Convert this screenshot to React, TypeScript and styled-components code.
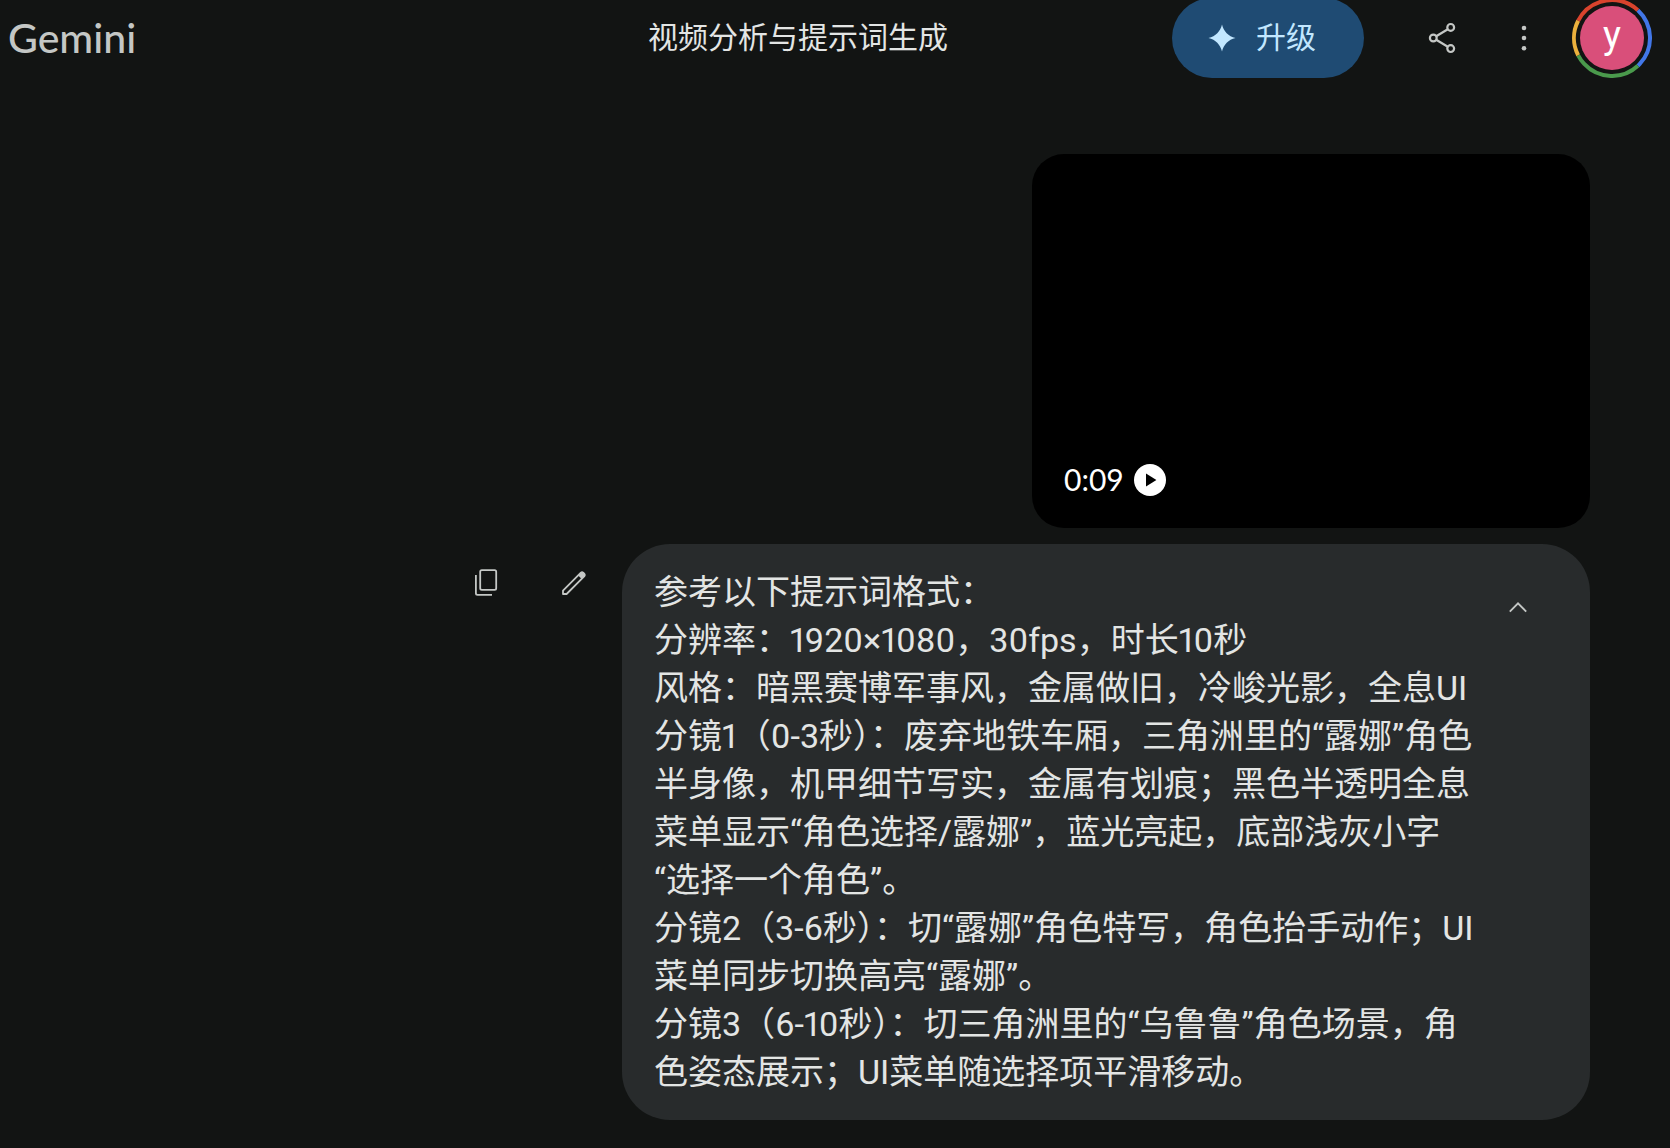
import React, { useState } from 'react';
import styled, { createGlobalStyle } from 'styled-components';

const GlobalStyle = createGlobalStyle`
  *, *::before, *::after { box-sizing: border-box; }
  body {
    margin: 0;
    background: #121413;
    color: #e3e5e4;
    font-family: Roboto, "Noto Sans CJK SC", sans-serif;
    font-variant-numeric: proportional-nums;
  }
`;

const Page = styled.div`
  display: flex;
  flex-direction: column;
  min-height: 100vh;
  overflow-x: hidden;
`;

const Header = styled.header`
  display: flex;
  align-items: center;
  height: 80px;
  margin-top: -2px;
  padding: 0 18px 0 8px;
`;

const Brand = styled.a`
  color: #c4c7c5;
  font: 500 41px/48px Lato, sans-serif;
  text-decoration: none;
`;

const Title = styled.h1`
  flex: 1;
  margin: 0;
  padding-right: 224px;
  text-align: right;
  font-size: 30px;
  font-weight: 400;
  line-height: 40px;
  white-space: nowrap;
`;

const UpgradeButton = styled.button`
  display: flex;
  align-items: center;
  gap: 20px;
  height: 80px;
  padding: 0 48px 0 36px;
  border: 0;
  border-radius: 40px;
  background: #1f4b73;
  color: #c2e7ff;
  font: inherit;
  font-size: 30px;
  line-height: 40px;
  white-space: nowrap;
  cursor: pointer;
`;

const HeaderTools = styled.div`
  display: flex;
  gap: 2px;
  margin: 0 8px 0 38px;
`;

const IconButton = styled.button`
  display: flex;
  flex: none;
  align-items: center;
  justify-content: center;
  width: 80px;
  height: 80px;
  padding: 0;
  border: 0;
  border-radius: 50%;
  background: transparent;
  color: #c4c7c5;
  cursor: pointer;
`;

const AvatarButton = styled.button`
  display: grid;
  flex: none;
  place-items: center;
  width: 80px;
  height: 80px;
  padding: 0;
  border: 0;
  border-radius: 50%;
  background: transparent;
  cursor: pointer;

  > * { grid-area: 1 / 1; }
`;

const AvatarFace = styled.span`
  width: 64px;
  height: 64px;
  border-radius: 50%;
  background: #d94f7a;
  color: #fff;
  font: 400 38px/58px Roboto, sans-serif;
  text-align: center;
`;

const Conversation = styled.main`
  display: flex;
  flex-direction: column;
  align-items: flex-end;
  gap: 16px;
  padding: 76px 80px 28px;
`;

const VideoCard = styled.button`
  display: flex;
  align-items: flex-end;
  gap: 10px;
  width: 558px;
  max-width: 100%;
  height: 374px;
  padding: 32px;
  border: 0;
  border-radius: 32px;
  background: #000;
  color: #fff;
  font: 30px/34px Lato, sans-serif;
  cursor: pointer;
`;

const MessageRow = styled.div`
  display: flex;
  align-items: flex-start;
  gap: 8px;
  max-width: 100%;
`;

const Bubble = styled.section`
  display: flex;
  align-items: flex-start;
  min-width: 0;
  padding: 24px 32px;
  border-radius: 48px;
  background: #282b2c;
`;

const Prompt = styled.div`
  flex: 0 1 824px;
  font-size: 34px;
  line-height: 48px;
`;

const PromptLine = styled.p`
  margin: 0;
`;

const Sparkle = () => (
  <svg width="28" height="28" viewBox="0 0 28 28" fill="currentColor" aria-hidden="true">
    <path d="M14 0.5C15.6 7.4 20.4 12.3 27.5 14C20.4 15.7 15.6 20.6 14 27.5C12.4 20.6 7.6 15.7 0.5 14C7.6 12.3 12.4 7.4 14 0.5Z" />
  </svg>
);

const ShareIcon = () => (
  <svg width="48" height="48" viewBox="0 0 48 48" fill="none" stroke="currentColor" strokeWidth="2.2" aria-hidden="true">
    <circle cx="15.3" cy="24" r="3.4" />
    <circle cx="32.7" cy="13.4" r="3.4" />
    <circle cx="32.7" cy="34.6" r="3.4" />
    <path d="M18.2 22.2L29.8 15.2M18.2 25.8L29.8 32.8" />
  </svg>
);

const MoreIcon = () => (
  <svg width="48" height="48" viewBox="0 0 48 48" fill="currentColor" aria-hidden="true">
    <circle cx="24" cy="14" r="2.3" />
    <circle cx="24" cy="24" r="2.3" />
    <circle cx="24" cy="34.2" r="2.3" />
  </svg>
);

const CopyIcon = () => (
  <svg width="48" height="48" viewBox="0 0 48 48" fill="none" stroke="currentColor" strokeWidth="1.8" aria-hidden="true">
    <rect x="18.2" y="10.2" width="16" height="19.6" rx="1.6" />
    <path d="M13.9 15V33.2A1.6 1.6 0 0 0 15.5 34.8H30" />
  </svg>
);

const PencilIcon = () => (
  <svg width="48" height="48" viewBox="0 0 48 48" aria-hidden="true">
    <path
      d="M13 34V30.6L30.9 12.7A1.8 1.8 0 0 1 33.2 12.7L34.4 13.9A1.8 1.8 0 0 1 34.4 16.2L16.6 34Z"
      fill="none"
      stroke="currentColor"
      strokeWidth="1.8"
      strokeLinejoin="round"
    />
    <path d="M28.2 15.4L30.9 12.7H33.2L34.4 13.9V16.2L31.7 18.9Z" fill="currentColor" />
  </svg>
);

const ChevronUpIcon = () => (
  <svg width="48" height="48" viewBox="0 0 48 48" fill="none" stroke="currentColor" strokeWidth="1.9" aria-hidden="true">
    <path d="M15.8 27.6L24 19.4L32.2 27.6" />
  </svg>
);

const PlayIcon = () => (
  <svg width="32" height="32" viewBox="0 0 32 32" aria-hidden="true">
    <circle cx="16" cy="16" r="16" fill="#fff" />
    <path d="M12 9.6V22.4L22.4 16Z" fill="#000" />
  </svg>
);

const ringSegments = [
  { color: '#d8432d', start: 207, length: 106 },
  { color: '#4277e8', start: 313, length: 94 },
  { color: '#4a9a4c', start: 47, length: 106 },
  { color: '#ecb13d', start: 153, length: 54 },
];

const AvatarRing = () => (
  <svg width="80" height="80" viewBox="0 0 80 80" fill="none" strokeWidth="4" aria-hidden="true">
    {ringSegments.map((s) => (
      <circle
        key={s.color}
        cx="40"
        cy="40"
        r="38"
        stroke={s.color}
        pathLength="360"
        strokeDasharray={`${s.length} ${360 - s.length}`}
        transform={`rotate(${s.start} 40 40)`}
      />
    ))}
  </svg>
);

const promptLines = [
  '参考以下提示词格式：',
  '分辨率：1920×1080，30fps，时长10秒',
  '风格：暗黑赛博军事风，金属做旧，冷峻光影，全息UI',
  '分镜1（0-3秒）：废弃地铁车厢，三角洲里的“露娜”角色半身像，机甲细节写实，金属有划痕；黑色半透明全息菜单显示“角色选择/露娜”，蓝光亮起，底部浅灰小字“选择一个角色”。',
  '分镜2（3-6秒）：切“露娜”角色特写，角色抬手动作；UI菜单同步切换高亮“露娜”。',
  '分镜3（6-10秒）：切三角洲里的“乌鲁鲁”角色场景，角色姿态展示；UI菜单随选择项平滑移动。',
];

export default function App() {
  const [expanded, setExpanded] = useState(true);
  const visibleLines = expanded ? promptLines : promptLines.slice(0, 3);

  return (
    <Page lang="zh-CN">
      <GlobalStyle />
      <Header>
        <Brand href="#">Gemini</Brand>
        <Title>视频分析与提示词生成</Title>
        <UpgradeButton type="button">
          <Sparkle />
          升级
        </UpgradeButton>
        <HeaderTools>
          <IconButton type="button" aria-label="分享">
            <ShareIcon />
          </IconButton>
          <IconButton type="button" aria-label="更多">
            <MoreIcon />
          </IconButton>
        </HeaderTools>
        <AvatarButton type="button" aria-label="账号">
          <AvatarRing />
          <AvatarFace>y</AvatarFace>
        </AvatarButton>
      </Header>

      <Conversation>
        <VideoCard type="button" aria-label="播放视频 0:09">
          <span>0:09</span>
          <PlayIcon />
        </VideoCard>

        <MessageRow>
          <IconButton type="button" aria-label="复制">
            <CopyIcon />
          </IconButton>
          <IconButton type="button" aria-label="修改">
            <PencilIcon />
          </IconButton>
          <Bubble>
            <Prompt>
              {visibleLines.map((line) => (
                <PromptLine key={line}>{line}</PromptLine>
              ))}
            </Prompt>
            <IconButton
              type="button"
              aria-label={expanded ? '收起' : '展开'}
              aria-expanded={expanded}
              onClick={() => setExpanded(!expanded)}
            >
              <ChevronUpIcon />
            </IconButton>
          </Bubble>
        </MessageRow>
      </Conversation>
    </Page>
  );
}
